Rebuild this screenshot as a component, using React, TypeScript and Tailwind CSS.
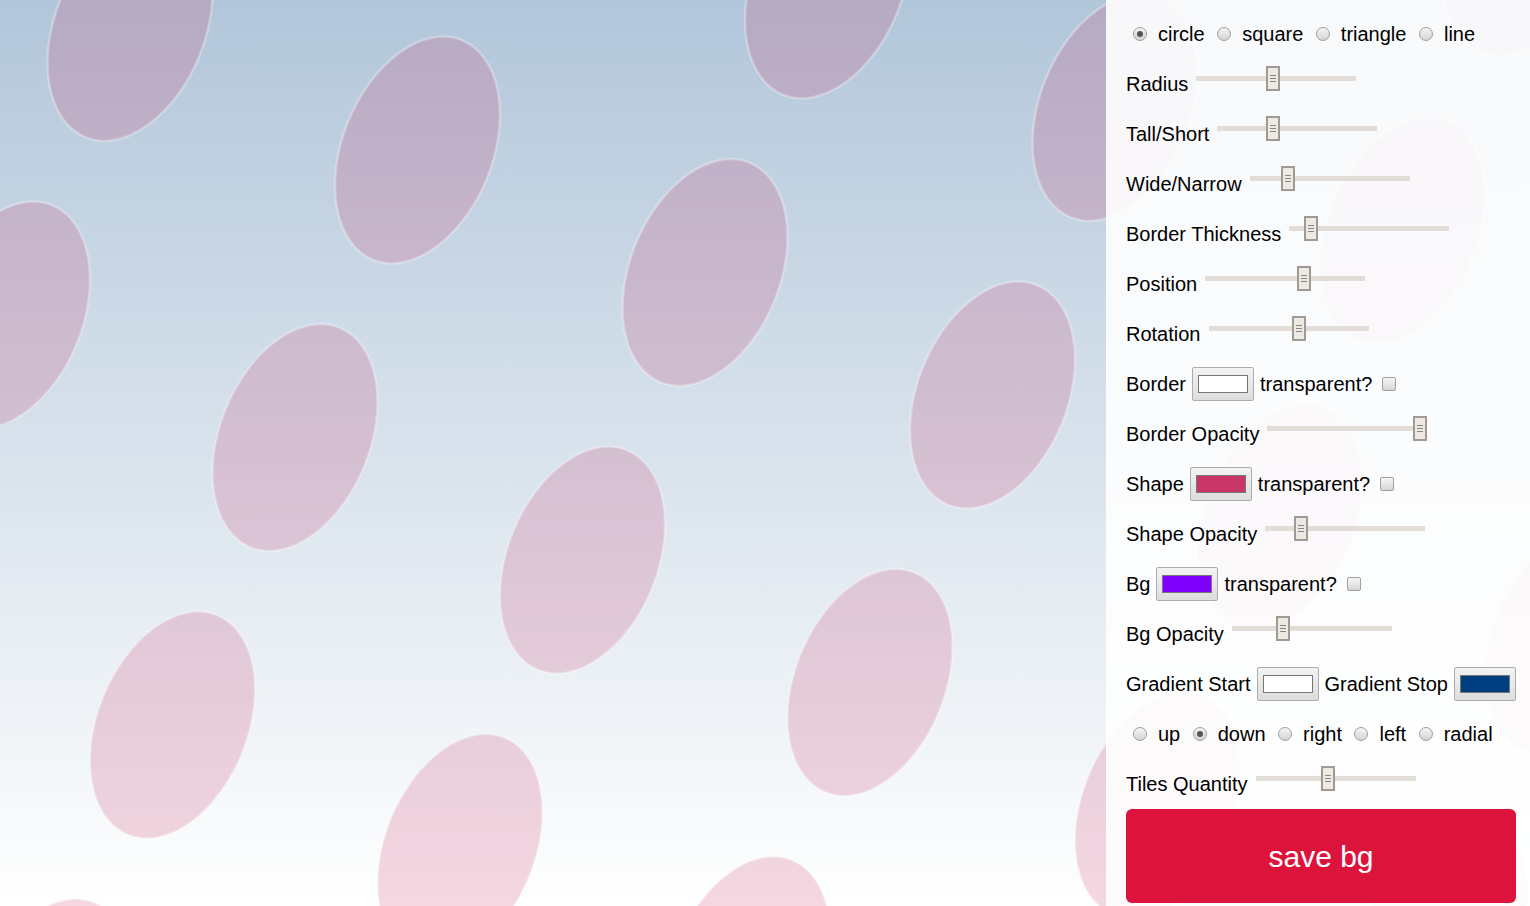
import React from "react";

// lattice of the tiled ellipses
const U = [287.5, 122.5];
const V = [-122.5, 287.5];
const ORIGIN = [417.5, 150];

function tiles() {
  const out: { x: number; y: number }[] = [];
  for (let i = -4; i <= 6; i++) {
    for (let j = -4; j <= 5; j++) {
      const x = ORIGIN[0] + U[0] * i + V[0] * j;
      const y = ORIGIN[1] + U[1] * i + V[1] * j;
      if (x > -200 && x < 1730 && y > -200 && y < 1110) out.push({ x, y });
    }
  }
  return out;
}

function Pattern() {
  return (
    <svg className="absolute inset-0" width="1530" height="906" viewBox="0 0 1530 906">
      <defs>
        <linearGradient id="bg" x1="0" y1="0" x2="0" y2="1">
          <stop offset="0" stopColor="#b2c6da" />
          <stop offset="1" stopColor="#ffffff" />
        </linearGradient>
      </defs>
      <rect width="1530" height="906" fill="url(#bg)" />
      {tiles().map((t, k) => (
        <ellipse
          key={k}
          cx={t.x}
          cy={t.y}
          rx={75}
          ry={118.5}
          transform={`rotate(22 ${t.x} ${t.y})`}
          fill="#c93667"
          fillOpacity={0.2}
          stroke="#ffffff"
          strokeOpacity={0.3}
          strokeWidth={2.5}
        />
      ))}
    </svg>
  );
}

function Radio({ checked, label }: { checked?: boolean; label: string }) {
  return (
    <div className="flex items-center gap-[11px]">
      <span className="flex h-[14px] w-[14px] shrink-0 items-center justify-center rounded-full border border-[#9f9f9f] bg-linear-to-b from-[#f4f4f4] to-[#d4d4d4]">
        {checked && <span className="h-[6px] w-[6px] rounded-full bg-[#555]" />}
      </span>
      <span>{label}</span>
    </div>
  );
}

function Slider({ thumb }: { thumb: number }) {
  return (
    <div className="relative ml-[8px] mb-[11px] flex h-[25px] w-[160px] shrink-0 items-center">
      <div className="h-[5px] w-full bg-[#e2ddd7]" />
      <div
        className="absolute top-0 flex h-[25px] w-[14px] flex-col items-center justify-center gap-[2px] border-2 border-[#a09a93] bg-[#edeae6]"
        style={{ left: thumb }}
      >
        <span className="h-px w-[6px] bg-[#8a847e]" />
        <span className="h-px w-[6px] bg-[#8a847e]" />
        <span className="h-px w-[6px] bg-[#8a847e]" />
      </div>
    </div>
  );
}

function ColorBox({ color }: { color: string }) {
  return (
    <span className="mx-[6px] flex h-[34px] w-[62px] shrink-0 items-center justify-center rounded-[2px] border border-[#adadad] bg-linear-to-b from-[#f3f3f3] to-[#dddddd]">
      <span className="h-[18px] w-[50px] border border-[#777]" style={{ backgroundColor: color }} />
    </span>
  );
}

function Check() {
  return (
    <span className="ml-[10px] h-[14px] w-[14px] shrink-0 rounded-[2px] border border-[#a0a0a0] bg-linear-to-b from-[#f6f6f6] to-[#d6d6d6]" />
  );
}

const Row = ({ children }: { children: React.ReactNode }) => (
  <div className="flex h-[50px] items-center whitespace-nowrap">{children}</div>
);

const sliders: Record<string, number> = {
  Radius: 70,
  "Tall/Short": 49,
  "Wide/Narrow": 31,
  "Border Thickness": 15,
  Position: 92,
  Rotation: 83,
};

export default function App() {
  return (
    <div className="relative h-[906px] w-[1530px] overflow-hidden font-['Liberation_Sans',Arial,sans-serif] text-[20px] leading-[23px] text-black">
      <Pattern />
      <div className="relative flex h-full">
        <div className="flex-1" />
        <aside className="h-full w-[424px] bg-white/90 pl-5 pr-[14px] pt-[9px]">
          <Row>
            <div className="ml-[7px] flex items-center gap-[12.5px]">
              <Radio checked label="circle" />
              <Radio label="square" />
              <Radio label="triangle" />
              <Radio label="line" />
            </div>
          </Row>
          {Object.entries(sliders).map(([name, pos]) => (
            <Row key={name}>
              <span>{name}</span>
              <Slider thumb={pos} />
            </Row>
          ))}
          <Row>
            <span>Border</span>
            <ColorBox color="#ffffff" />
            <span>transparent?</span>
            <Check />
          </Row>
          <Row>
            <span>Border Opacity</span>
            <Slider thumb={146} />
          </Row>
          <Row>
            <span>Shape</span>
            <ColorBox color="#c93667" />
            <span>transparent?</span>
            <Check />
          </Row>
          <Row>
            <span>Shape Opacity</span>
            <Slider thumb={29} />
          </Row>
          <Row>
            <span>Bg</span>
            <ColorBox color="#8000ff" />
            <span>transparent?</span>
            <Check />
          </Row>
          <Row>
            <span>Bg Opacity</span>
            <Slider thumb={44} />
          </Row>
          <Row>
            <span>Gradient Start</span>
            <ColorBox color="#ffffff" />
            <span>Gradient Stop</span>
            <ColorBox color="#003f7f" />
          </Row>
          <Row>
            <div className="ml-[7px] flex items-center gap-[12.5px]">
              <Radio label="up" />
              <Radio checked label="down" />
              <Radio label="right" />
              <Radio label="left" />
              <Radio label="radial" />
            </div>
          </Row>
          <Row>
            <span>Tiles Quantity</span>
            <Slider thumb={65} />
          </Row>
          <button className="flex h-[94px] w-full items-center justify-center rounded-md bg-[#dc143c] text-[30px] text-white">
            save bg
          </button>
        </aside>
      </div>
    </div>
  );
}
